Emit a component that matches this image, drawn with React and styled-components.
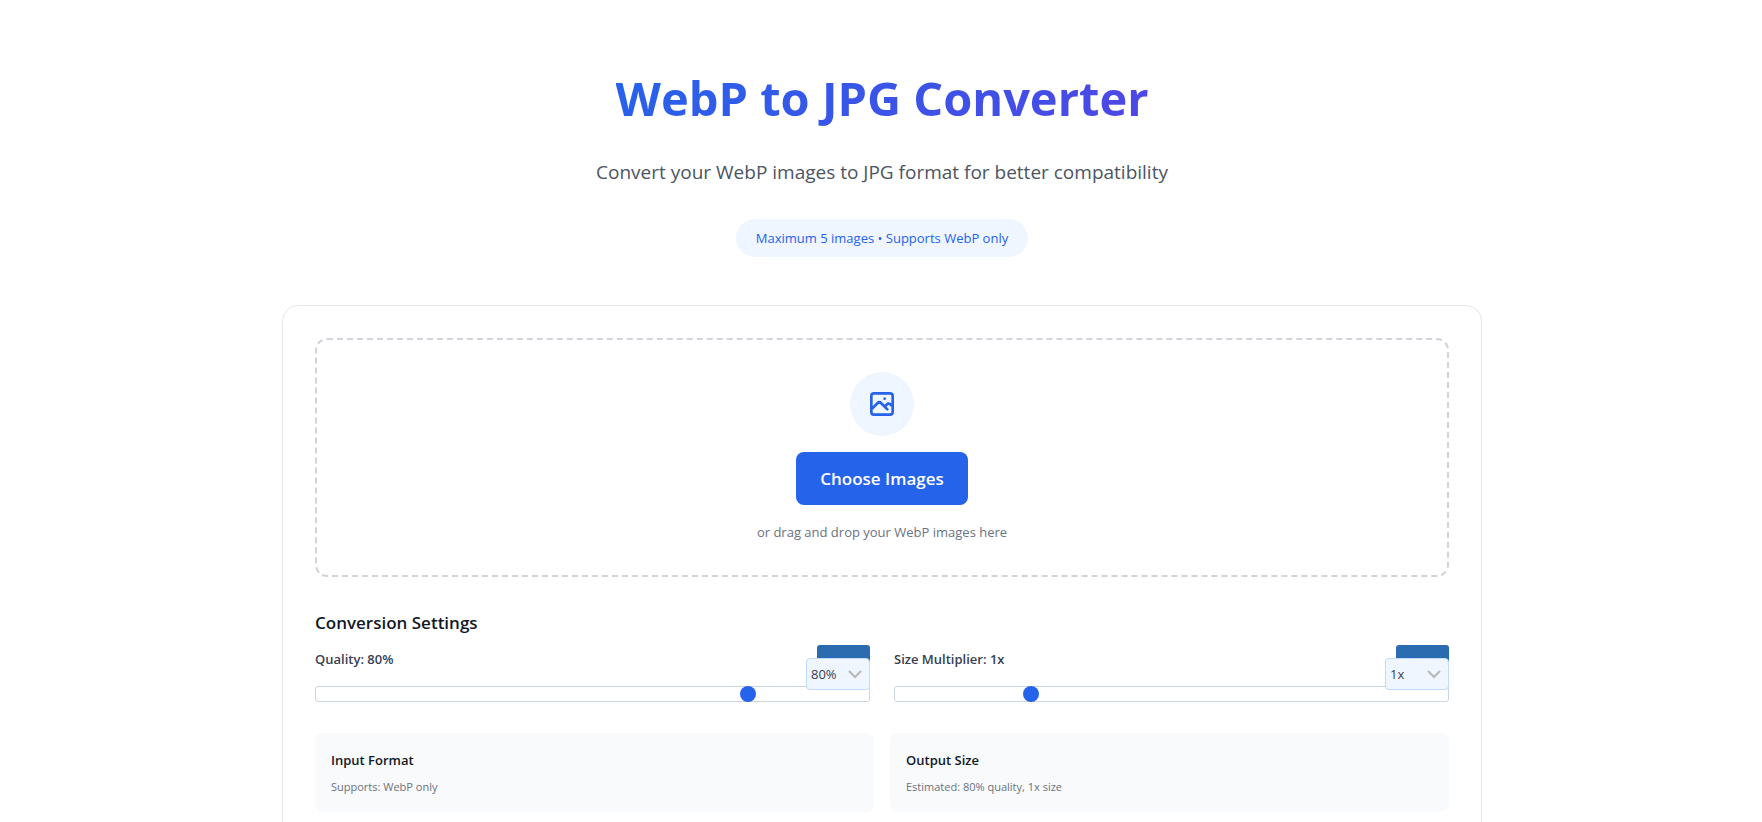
import React, { useState } from "react";
import styled, { createGlobalStyle } from "styled-components";

const GlobalStyle = createGlobalStyle`
  *, *::before, *::after { box-sizing: border-box; }
  body {
    margin: 0;
    background: #fff;
    color: #111827;
    font-family: "Segoe UI", "Open Sans", "Noto Sans", sans-serif;
  }
  h1, h2, h3, p { margin: 0; }
  button, input, select { font-family: inherit; }
`;

const Page = styled.main`
  max-width: 1202px;
  margin: 0 auto;
  padding: 64px 0 32px 2px;
`;

const Header = styled.header`
  display: flex;
  flex-direction: column;
  align-items: center;
  text-align: center;
`;

const Title = styled.h1`
  font-size: 47px;
  line-height: 68px;
  font-weight: 700;
  color: transparent;
  background: linear-gradient(135deg, #2563eb, #4f46e5);
  -webkit-background-clip: text;
  background-clip: text;
`;

const Subtitle = styled.p`
  margin-top: 24px;
  font-size: 19px;
  line-height: 32px;
  color: #4b5563;
`;

const Pill = styled.p`
  margin-top: 31px;
  padding: 8px 20px;
  border-radius: 20px;
  background: #eff6ff;
  color: #2563eb;
  font-size: 13px;
  line-height: 22px;
`;

const Card = styled.section`
  margin-top: 48px;
  padding: 32px;
  border: 1px solid #e5e7eb;
  border-radius: 16px;
  box-shadow: 0 1px 2px rgba(0, 0, 0, 0.05);
`;

const DropZone = styled.div`
  display: flex;
  flex-direction: column;
  align-items: center;
  gap: 16px;
  padding: 32px;
  border: 2px dashed #d1d5db;
  border-radius: 12px;
`;

const IconCircle = styled.div`
  display: grid;
  place-items: center;
  width: 64px;
  height: 64px;
  border-radius: 50%;
  background: #eff6ff;
  color: #2563eb;
`;

const ChooseButton = styled.button`
  padding: 12px 24px;
  border: 0;
  border-radius: 8px;
  background: #2563eb;
  color: #fff;
  font-size: 17px;
  line-height: 29px;
  font-weight: 600;
`;

const Hint = styled.p`
  font-size: 13px;
  line-height: 22px;
  color: #6b7280;
`;

const SectionTitle = styled.h2`
  margin-top: 32px;
  font-size: 17px;
  line-height: 28px;
  font-weight: 600;
`;

const Columns = styled.div`
  display: grid;
  grid-template-columns: 1fr 1fr;
  gap: ${(p) => p.$gap}px;
  margin-top: ${(p) => p.$top}px;
`;

const Field = styled.div`
  position: relative;
`;

const FieldLabel = styled.label`
  display: block;
  font-size: 13px;
  line-height: 28px;
  font-weight: 600;
  color: #374151;
`;

const Slider = styled.input`
  appearance: none;
  display: block;
  width: 100%;
  height: 16px;
  margin: 13px 0 0;
  padding: 0 8px;
  border: 1px solid #cbd5e0;
  border-radius: 3px;
  background: #fff;
  &::-webkit-slider-thumb {
    appearance: none;
    width: 16px;
    height: 16px;
    border-radius: 50%;
    background: #2563eb;
  }
`;

const Overlay = styled.div`
  position: absolute;
  top: 0;
  right: 0;
  display: flex;
  flex-direction: column;
  align-items: flex-end;
`;

const ResetButton = styled.button`
  width: 53px;
  height: 24px;
  padding: 8px 0 0;
  overflow: hidden;
  border: 0;
  border-radius: 3px;
  background: #2b6cb0;
  color: #2563eb;
  font-size: 13px;
  line-height: 16px;
`;

const SelectBox = styled.div`
  position: relative;
  margin-top: -11px;
`;

const Select = styled.select`
  appearance: none;
  display: block;
  width: 64px;
  height: 32px;
  padding: 0 4px;
  border: 1px solid #bfdbfe;
  border-radius: 4px;
  background: #eff6ff;
  color: #374151;
  font-size: 13px;
`;

const Chevron = styled.svg`
  position: absolute;
  top: 12px;
  right: 8px;
  pointer-events: none;
`;

const InfoCard = styled.div`
  padding: 16px;
  border-radius: 8px;
  background: #f9fafb;
`;

const InfoTitle = styled.h3`
  font-size: 13px;
  line-height: 22px;
  font-weight: 600;
`;

const InfoText = styled.p`
  margin-top: 7px;
  font-size: 11px;
  line-height: 18px;
  color: #6b7280;
`;

function ImageIcon() {
  return (
    <svg width="32" height="32" viewBox="0 0 24 24" fill="none" stroke="currentColor" strokeWidth="2" strokeLinecap="round" strokeLinejoin="round" aria-hidden="true">
      <path d="M4 16l4.586-4.586a2 2 0 012.828 0L16 16m-2-2l1.586-1.586a2 2 0 012.828 0L20 14m-6-6h.01M6 20h12a2 2 0 002-2V6a2 2 0 00-2-2H6a2 2 0 00-2 2v12a2 2 0 002 2z" />
    </svg>
  );
}

function RangeField({ id, label, value, onChange, min, max, step, initial, options, unit }) {
  return (
    <Field>
      <FieldLabel htmlFor={id}>{label}: {value}{unit}</FieldLabel>
      <Slider id={id} type="range" min={min} max={max} step={step} value={value} onChange={(e) => onChange(Number(e.target.value))} />
      <Overlay>
        <ResetButton type="button" onClick={() => onChange(initial)}>Reset</ResetButton>
        <SelectBox>
          <Select aria-label={label} value={value} onChange={(e) => onChange(Number(e.target.value))}>
            {options.map((o) => <option key={o} value={o}>{o}{unit}</option>)}
          </Select>
          <Chevron width="14" height="9" viewBox="0 0 14 9" fill="none" stroke="#b8b8b8" strokeWidth="2" aria-hidden="true">
            <path d="M1 1l6 6 6-6" />
          </Chevron>
        </SelectBox>
      </Overlay>
    </Field>
  );
}

export default function App() {
  const [quality, setQuality] = useState(80);
  const [size, setSize] = useState(1);
  return (
    <>
      <GlobalStyle />
      <Page>
        <Header>
          <Title>WebP to JPG Converter</Title>
          <Subtitle>Convert your WebP images to JPG format for better compatibility</Subtitle>
          <Pill>Maximum 5 images • Supports WebP only</Pill>
        </Header>
        <Card>
          <DropZone>
            <IconCircle><ImageIcon /></IconCircle>
            <ChooseButton type="button">Choose Images</ChooseButton>
            <Hint>or drag and drop your WebP images here</Hint>
          </DropZone>
          <SectionTitle>Conversion Settings</SectionTitle>
          <Columns $gap={24} $top={8}>
            <RangeField id="quality" label="Quality" unit="%" min={1} max={100} step={1} initial={80} options={[60, 80, 100]} value={quality} onChange={setQuality} />
            <RangeField id="size" label="Size Multiplier" unit="x" min={0.1} max={4} step={0.1} initial={1} options={[0.5, 1, 2]} value={size} onChange={setSize} />
          </Columns>
          <Columns $gap={16} $top={31}>
            <InfoCard>
              <InfoTitle>Input Format</InfoTitle>
              <InfoText>Supports: WebP only</InfoText>
            </InfoCard>
            <InfoCard>
              <InfoTitle>Output Size</InfoTitle>
              <InfoText>Estimated: {quality}% quality, {size}x size</InfoText>
            </InfoCard>
          </Columns>
        </Card>
      </Page>
    </>
  );
}
